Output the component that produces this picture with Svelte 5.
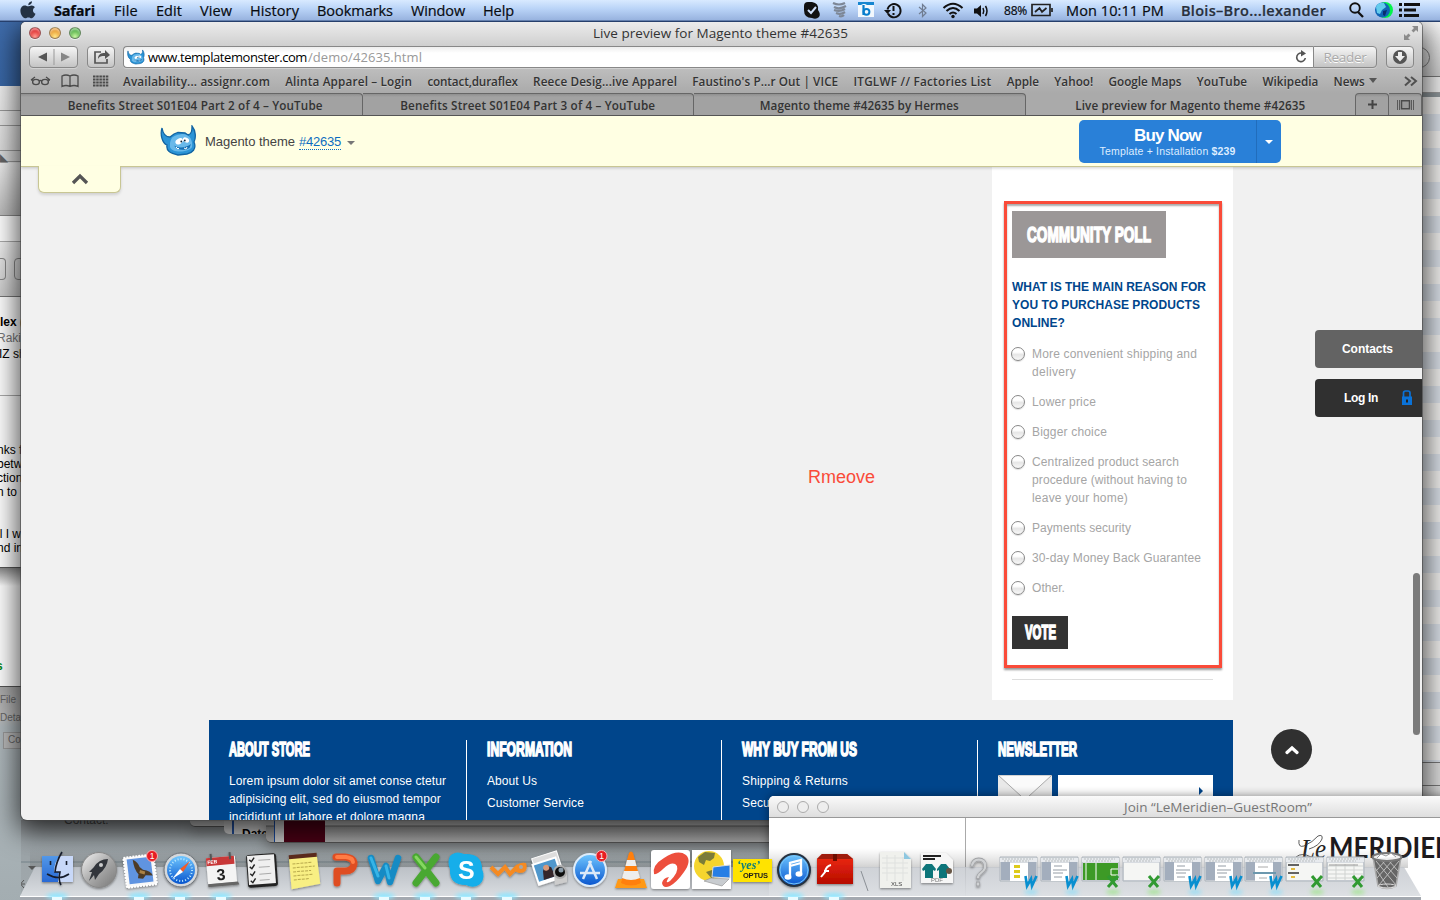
<script>
  // Adjusts tracking so that a label takes up the given measure.
  function fit(node, width) {
    const natural = node.getBoundingClientRect().width;
    const count = node.textContent.length;
    if (count) node.style.letterSpacing = (width - natural) / count + 'px';
  }

  const menus = [['File', 24], ['Edit', 26], ['View', 32], ['History', 49], ['Bookmarks', 76], ['Window', 54], ['Help', 31]];
  const bookmarks = [
    ['Availability... assignr.com', 147], ['Alinta Apparel – Login', 127], ['contact,duraflex', 90.5],
    ['Reece Desig...ive Apparel', 144], ["Faustino's P...r Out | VICE", 146], ['ITGLWF // Factories List', 138],
    ['Apple', 32.5], ['Yahoo!', 39], ['Google Maps', 73], ['YouTube', 50.5], ['Wikipedia', 56], ['News', 31]
  ];
  const options = [
    [['More convenient shipping and', 165], ['delivery', 44]],
    [['Lower price', 64]],
    [['Bigger choice', 75]],
    [['Centralized product search', 147], ['procedure (without having to', 155], ['leave your home)', 96]],
    [['Payments security', 99]],
    [['30-day Money Back Guarantee', 169]],
    [['Other.', 33]]
  ];
  const docs = [
    [1019, 'W', 'yellow'], [1060, 'W', 'text'], [1101, 'X', 'green'], [1142, 'X', 'sheet'], [1183, 'W', 'text'],
    [1224, 'W', 'text'], [1264, 'W', 'band'], [1305, 'X', 'blocks'], [1346, 'X', 'grid']
  ];
  const running = [57, 139, 180, 221, 384, 425, 466, 507, 793, 834];
</script>

{#snippet label(text, w)}<span class="label" use:fit={w}>{text}</span>{/snippet}

{#snippet heading(text, w, h)}
  <svg class="heading" width={w} height={h} viewBox="0 0 {w} {h}">
    <text x="0" y={h - 1} textLength={w} lengthAdjust="spacingAndGlyphs" font-size={h * 1.3}>{text}</text>
  </svg>
{/snippet}

{#snippet monster()}
  <path d="M1 2 C2 8 5 11 9 11 L13 8 L17 6.500 L24 7 L27 9 C31 8 31 4 31 0 C35 5 35 12 33 16 C36 23 31 27 26 28 L17 29 C9 27 5 25 6 19 C1 17 -1 8 1 2Z" fill="#2b94d6" stroke="#1264a3" stroke-width="1.300"/>
  <path d="M9 17 C10 10 15 9 21 8 C29 8 32 15 31 21 C29 26 11 28 9 21Z" fill="#69b9ea"/>
  <ellipse cx="18.500" cy="15.500" rx="4" ry="2.700" fill="#fff" transform="rotate(-30 18 16)"/>
  <ellipse cx="25" cy="14" rx="3.300" ry="2.300" fill="#fff" transform="rotate(30 25 14)"/>
  <circle cx="20.300" cy="15.500" r=".9" fill="#123"/><circle cx="23.800" cy="14.500" r=".9" fill="#123"/>
  <path d="M13 19.500 C17 22.500 25 22 30 18 L28.500 22 C23 25 16 24.500 13 19.500Z" fill="#1670b4"/>
  <path d="M15 21l2 2 1-1M26 21l-1 2-2-1" stroke="#fff" fill="none"/>
{/snippet}

<div class="desktop">
  <div class="left-windows">
    <div class="blue"></div>
    <div class="chrome"><i></i><i></i><i></i><i></i><b class="pull">◣</b></div>
    <div class="search"></div>
    <div class="tools"><span></span><span></span></div>
    <div class="mail">
      <p class="bold">lex (</p><p class="dim">Raki</p><p>IZ sh</p>
      <hr />
      <div class="body"><p>nks fo</p><p>betw</p><p>ction</p><p>n to</p><p>&nbsp;</p><p>&nbsp;</p><p>ll I wa</p><p>nd in</p></div>
    </div>
    <div class="under"><b>s</b></div>
    <div class="panel"><p>File</p><p>Detai</p><p class="tab">Con</p></div>
  </div>

  <div class="bottom-windows">
    <div class="strip"><span>Contact:</span></div>
    <div class="date">Date</div>
    <div class="maroon"><span></span></div>
    <svg class="back" width="769" height="80" viewBox="0 820 769 80">
      <path d="M0 820v74H769M12 900v-38h757" stroke="#75838a" fill="none"/>
      <path d="M28 866h8l-4 4z" fill="#555"/><path d="M20 879v10M15 884h10M17 880l7 8M24 880l-7 8" stroke="#555"/>
    </svg>
  </div>

  <div class="right-windows"><div class="cap"><span></span></div><div class="gap"></div><div class="list"></div><div class="status"></div><div class="white"></div></div>

  <main class="safari">
    <header class="chrome-bar">
      <div class="title-row">
        <span class="lights"><i class="red"></i><i class="amber"></i><i class="green"></i></span>
        {@render label('Live preview for Magento theme #42635', 255)}
        <svg class="expand" width="14" height="14" viewBox="0 0 14 14"><path d="M8 0h6v6l-2-2-2.500 2.500-2-2L10 2zM6 14H0V8l2 2 2.500-2.500 2 2L4 12z" fill="#8b8b8b"/></svg>
      </div>
      <div class="tool-row">
        <div class="nav"><svg width="48" height="20" viewBox="0 0 48 20"><path d="M17 5.500v9L8 10z" fill="#555"/><path d="M31 5.500v9l9-4.500z" fill="#868686"/><path d="M24 2v16" stroke="#999"/></svg></div>
        <div class="share"><svg width="26" height="20" viewBox="0 0 26 20"><path d="M13 5H7v11h12v-4" stroke="#555" stroke-width="1.700" fill="none"/><path d="M10 12c0-5 3-6 7-6V3l5 5-5 4V9c-4 0-5 0-7 3z" fill="#555"/></svg></div>
        <div class="url">
          <svg width="18" height="16" viewBox="-1 -1 37 31">{@render monster()}</svg>
          {@render label('www.templatemonster.com', 159)}<span class="path">{@render label('/demo/42635.html', 114)}</span>
          <svg class="reload" width="14" height="14" viewBox="0 0 14 14"><path d="M9 3.500A4.300 4.300 0 1 0 11.300 8" stroke="#555" stroke-width="1.600" fill="none"/><path d="M7 0l5 3.500L7 6.500z" fill="#555"/></svg>
        </div>
        <div class="reader">{@render label('Reader', 43)}</div>
        <div class="download"><svg width="16" height="16" viewBox="0 0 16 16"><circle cx="8" cy="8" r="7" fill="#555"/><path d="M6 3h4v4h3l-5 5.500L3 7h3z" fill="#eee"/></svg></div>
      </div>
      <div class="bookmark-row">
        <svg class="marks" width="80" height="16" viewBox="29 73 80 16" fill="none" stroke="#4b4b4b">
          <g stroke-width="1.300"><ellipse cx="36" cy="82" rx="3.400" ry="2.600"/><ellipse cx="45" cy="82" rx="3.400" ry="2.600"/><path d="M31 80h2M48 80h2M39 81q1.500-1 3 0M31 80l4-3M50 80l-4-3"/>
          <path d="M62 86.500V76q4-2 8 0 4-2 8 0v10.500q-4-2-8 0-4-2-8 0zM70 76v10"/></g>
          <path d="M93 76.500h16M93 79.500h16M93 82.500h16M93 85.500h16" stroke-width="2" stroke-dasharray="2.500 .7"/>
        </svg>
        <div class="links">{#each bookmarks as [t, w]}{@render label(t, w)}{/each}</div>
        <svg class="more" width="50" height="14" viewBox="0 0 50 14"><path d="M0 4h8L4 9z" fill="#555"/><path d="M36 3l5 4-5 4.500M42 3l5 4-5 4.500" stroke="#505050" stroke-width="2" fill="none"/></svg>
      </div>
      <div class="tabs">
        <div class="tab">{@render label('Benefits Street S01E04 Part 2 of 4 – YouTube', 255)}</div>
        <div class="tab">{@render label('Benefits Street S01E04 Part 3 of 4 – YouTube', 255)}</div>
        <div class="tab">{@render label('Magento theme #42635 by Hermes', 199)}</div>
        <div class="tab active">{@render label('Live preview for Magento theme #42635', 230)}</div>
        <div class="tab small plus"><svg width="9" height="9" viewBox="0 0 9 9"><path d="M4.500 0v9M0 4.500h9" stroke="#444" stroke-width="2"/></svg></div>
        <div class="tab small"><svg width="17" height="10" viewBox="0 0 17 10"><path d="M.5 0v10M2.500 0v10M14.500 0v10M16.500 0v10" stroke="#5a5a5a"/><path d="M4.500.7h8v8h-8z" fill="#999" stroke="#4a4a4a" stroke-width="1.500"/></svg></div>
      </div>
    </header>

    <section class="page">
      <div class="promo">
        <svg class="logo" width="36" height="31" viewBox="-1 -1 36 31">{@render monster()}</svg>
        <span class="theme">{@render label('Magento theme', 90)}</span>
        <a class="number" href="#theme">{@render label('#42635', 42)}</a>
        <i class="caret"></i>
        <div class="buy"><div><strong>{@render label('Buy Now', 67)}</strong><small>{@render label('Template + Installation ', 112)}<b>{@render label('$239', 24)}</b></small></div><i></i></div>
      </div>
      <div class="pull-tab"><svg width="18" height="12" viewBox="0 0 18 12"><path d="M2 10l7-7 7 7" stroke="#555" stroke-width="3.300" fill="none"/></svg></div>

      <aside class="column">
        <div class="poll">
          <h2>{@render heading('COMMUNITY POLL', 124, 17)}</h2>
          <div class="question">
            <div>{@render label('WHAT IS THE MAIN REASON FOR', 194)}</div><div>{@render label('YOU TO PURCHASE PRODUCTS', 188)}</div><div>{@render label('ONLINE?', 53)}</div>
          </div>
          <ul>{#each options as lines}<li><i class="radio"></i><div>{#each lines as [t, w]}<div>{@render label(t, w)}</div>{/each}</div></li>{/each}</ul>
          <button>{@render heading('VOTE', 31, 15)}</button>
        </div>
        <hr />
      </aside>

      <footer>
        <div class="col about"><h3>{@render heading('ABOUT STORE', 81, 15)}</h3>
          <div>{@render label('Lorem ipsum dolor sit amet conse ctetur', 217)}</div><div>{@render label('adipisicing elit, sed do eiusmod tempor', 212)}</div><div>{@render label('incididunt ut labore et dolore magna', 196)}</div></div>
        <div class="col linked"><h3>{@render heading('INFORMATION', 85, 15)}</h3><div>{@render label('About Us', 50)}</div><div>{@render label('Customer Service', 97)}</div></div>
        <div class="col linked"><h3>{@render heading('WHY BUY FROM US', 115, 15)}</h3><div>{@render label('Shipping & Returns', 106)}</div><div>{@render label('Secure Shopping', 94)}</div></div>
        <div class="col"><h3>{@render heading('NEWSLETTER', 79, 15)}</h3>
          <div class="newsletter"><svg width="54" height="36" viewBox="0 0 54 36"><path d="M0 0h54v36H0z" fill="#e9e9e9"/><path d="M0 0h54L30 22q-3 2-6 0z" fill="#fafafa" stroke="#aaa"/></svg><div class="field"><i></i></div></div>
        </div>
      </footer>

      <span class="note">{@render label('Rmeove', 67)}</span>
      <div class="side contacts">{@render label('Contacts', 51)}</div>
      <div class="side login">{@render label('Log In', 34)}<svg width="12" height="16" viewBox="0 0 12 16"><path d="M2.500 7V3q0-2 2-2h2.500q2 0 2 2v4" stroke="#0a72d8" stroke-width="1.700" fill="none"/><path d="M1 6.500h10V15H1z" fill="#0a72d8"/><path d="M5 9.500h2v3H5z" fill="#222"/></svg></div>
      <div class="up"><svg width="14" height="10" viewBox="0 0 14 10"><path d="M2 7.500l5-4.500 5 4.500" stroke="#fff" stroke-width="3.200" stroke-linecap="round" fill="none"/></svg></div>
      <div class="scrollbar"></div>
    </section>
  </main>

  <section class="join">
    <div class="join-title"><span class="rings"><i></i><i></i><i></i></span>{@render label('Join “LeMeridien–GuestRoom”', 188)}</div>
    <div class="join-body">
      <svg width="474" height="82" viewBox="966 818 474 82">
        <text x="1301" y="858" font-family="'Liberation Serif', serif" font-style="italic" font-size="27" textLength="25" lengthAdjust="spacingAndGlyphs" fill="#222">Le</text>
        <path d="M1299 840q-1 8 5 6 9-4 14-10 5-2 4 3-3 7-13 10M1296 857q6-5 15 0" stroke="#333" stroke-width=".8" fill="none"/>
        <text x="1329" y="857.500" font-family="Lato, sans-serif" font-weight="700" font-size="28" textLength="126" lengthAdjust="spacingAndGlyphs" fill="#1d1a1c">MERIDIEN</text>
      </svg>
    </div>
  </section>

  <nav class="menubar">
    <svg class="apple" width="16" height="18" viewBox="0 0 16 18"><path d="M12 .2c.2 2-1.600 3.900-3.700 4C8 2.300 9.900.4 12 .2zM8 5.300c1 0 2-.9 3.700-.9 1.300 0 2.500.7 3.200 1.800-2.800 1.700-2.400 5.400.6 6.600-.9 2.300-2.300 4.500-3.800 4.500-1.300 0-1.700-.8-3.300-.8s-2.100.8-3.300.8C3 17.300.4 13.300.4 9.800c0-3.400 2.200-5.300 4.400-5.300 1.400 0 2.500.8 3.200.8z" fill="#243244"/></svg>
    <span class="app">{@render label('Safari', 41)}</span>
    {#each menus as [t, w]}{@render label(t, w)}{/each}
    <div class="status-items">
      <svg class="glyphs" width="190" height="22" viewBox="800 0 190 22">
        <path d="M804 6q0-4 4-4h4q7 1 6 8 3 4 1 7-3 3-7 1-8 0-8-8z" fill="#111"/><path d="M808 10l3 3 5-6" stroke="#cfe0fa" stroke-width="2" fill="none"/>
        <path d="M833 3q6 3 12 0M834 7q5 3 12-1M834 10q6 2 11-1M836 13q5 2 9-1M839 16q3 1 5-1" stroke="#7d8796" stroke-width="2.200" fill="none"/>
        <path d="M858 2h16v15h-16z" fill="#f2f8fd"/><path d="M858 2h16v3h-7l-2-1h-2l-2 1h-3z" fill="#1686d0"/><path d="M863.500 5v10" stroke="#087dcc" stroke-width="2.200"/><circle cx="866.500" cy="11.800" r="2.900" fill="none" stroke="#087dcc" stroke-width="2"/>
        <path d="M888 13.500a6.600 6.600 0 1 0-.5-4" stroke="#111" stroke-width="1.900" fill="none"/><path d="M884 10h7l-3.500 4z" fill="#111"/><path d="M893.500 6v5M893.500 13v2" stroke="#111" stroke-width="2"/>
        <path d="M919 7l7 6-3.500 3.500v-12L926 8l-7 6" stroke="#707d91" stroke-width="1.200" fill="none"/>
        <path d="M943.500 8q9.500-8.500 19 0M946.500 11q6.500-6 13 0M949.500 14q3.500-3 7 0" stroke="#111" stroke-width="2.100" fill="none"/><circle cx="953" cy="16.500" r="1.700" fill="#111"/>
        <path d="M974 8.500h3l4-3.500v12l-4-3.500h-3z" fill="#111"/><path d="M983 8q1.500 3 0 6M985.500 6q3 5 0 10" stroke="#111" stroke-width="1.500" fill="none"/>
      </svg>
      <span class="percent">{@render label('88%', 23)}</span>
      <svg class="battery" width="23" height="14" viewBox="0 0 23 14"><path d="M1 1.500h18v11H1zM21 5v4M4 9l4.500-4 2.500 4 4.500-4" stroke="#222" stroke-width="1.700" fill="none"/></svg>
      <span class="clock">{@render label('Mon 10:11 PM', 98)}</span>
      <span class="user">{@render label('Blois–Bro...lexander', 145)}</span>
      <svg class="tail" width="73" height="20" viewBox="1348 1 73 20"><circle cx="1355" cy="9" r="4.800" fill="none" stroke="#111" stroke-width="1.900"/><path d="M1358 13l5 5" stroke="#111" stroke-width="2.300"/><circle cx="1385" cy="11" r="8" fill="#02f34b"/><circle cx="1382.500" cy="11" r="7.500" fill="#1065b5"/><path d="M1376 8q2-5 8-4l2 4-4 3-2 4-3-1z" fill="#63cbed"/><path d="M1383 12l4-1-2 6-2-1z" fill="#092e70"/><path d="M1399 5.500h3M1404 5.500h16M1399 11h3M1404 11h12M1399 16.500h3M1404 16.500h15" stroke="#111" stroke-width="3"/></svg>
    </div>
  </nav>

  <svg class="dock" width="1440" height="60" viewBox="0 840 1440 60">
    <defs>
      <linearGradient id="shelf" x2="0" y2="1"><stop offset="0" stop-color="#c3c7cd" stop-opacity=".8"/><stop offset="1" stop-color="#dcdfe3" stop-opacity=".97"/></linearGradient>
      <linearGradient id="blue" x2="0" y2="1"><stop offset="0" stop-color="#70c7ff"/><stop offset="1" stop-color="#0754ce"/></linearGradient>
      <linearGradient id="silver" x2="1" y2="1"><stop offset="0" stop-color="#f5f5f5"/><stop offset=".5" stop-color="#aaa"/><stop offset="1" stop-color="#777"/></linearGradient>
      <linearGradient id="haze" x2="0" y2="1"><stop offset="0" stop-color="#777" stop-opacity="0"/><stop offset="1" stop-color="#555" stop-opacity=".28"/></linearGradient>
      <linearGradient id="red" x2="0" y2="1"><stop offset="0" stop-color="#f12b13"/><stop offset="1" stop-color="#b60b00"/></linearGradient>
      <filter id="drop" x="-.3" y="-.3" width="1.600" height="1.700"><feDropShadow dx="0" dy="1.200" stdDeviation="1.200" flood-opacity=".4"/></filter>
      <filter id="soft" x="-1" y="-1" width="3" height="3"><feGaussianBlur stdDeviation="2"/></filter>
    </defs>
    <path d="M30 848H1408V868H30z" fill="url(#haze)"/>
    <path d="M35 867H1404L1421 896H20z" fill="url(#shelf)"/>
    <path d="M20 896H1421V900H20z" fill="#a4a9b0"/><path d="M20 896.500H1421" stroke="#fff"/>
    {#each running as x}<ellipse cx={x} cy="896" rx="11" ry="3" fill="#8ee6ff" filter="url(#soft)"/><path d="M{x - 5} 897h10v3h-10z" fill="#e9fbff"/>{/each}
    <g filter="url(#drop)">
      <path d="M42 856h31v26H42z" fill="url(#blue)"/><path d="M42 856h18q-6 6-6 16h5q-1 4-1 10H42z" fill="#3f78d8" opacity=".6"/><path d="M60 856h13v26H58q0-6 1-10h-5q0-10 6-16z" fill="#c8d8f8"/><path d="M62 852q-6 10-7 20h5q-2 8 1 13M47 874q12 7 22 0M50.500 861v4M66.500 861v4" stroke="#161c2b" stroke-width="1.600" fill="none"/>
      <circle cx="99" cy="870" r="17.500" fill="url(#silver)" stroke="#888"/><path d="M89 872l5-5q5-8 14-8-1 9-9 15l-4 6-1-5-5 6 3-9zM88 879l4-3" fill="#30343a"/><circle cx="101" cy="865" r="2" fill="#ccc"/>
      <g transform="rotate(-7 140 870)"><path d="M125 856h30v30h-30z" fill="#f8f8f8" stroke="#fff" stroke-width="2" stroke-dasharray="2 1"/><path d="M128 858h24v25h-24z" fill="#6094e1"/><path d="M134 859q5 3 6 8l3 3q8 2 9 7l-7-1-3 3-5-1 1-4q-4-5-4-15z" fill="#4e3b27"/><path d="M140 870l5 2-1 3-5-2z" fill="#ab8244"/></g>
      <circle cx="181" cy="870" r="17" fill="#d5d8db" stroke="#70757b"/><circle cx="181" cy="870" r="14" fill="url(#blue)"/><circle cx="181" cy="870" r="11" fill="none" stroke="#c3eeff" stroke-width="2" stroke-dasharray="1 2"/><path d="M190 861l-7 11-3-3z" fill="#f65b25"/><path d="M172 879l8-10 3 3z" fill="#fff"/>
      <g transform="rotate(-5 221 870)"><path d="M207 857h29v26h-29z" fill="#f4f4f4"/><path d="M207 857h28v8h-28z" fill="#c83839"/><path d="M207 883h30l1 3h-31z" fill="#666"/><path d="M212 853v7M231 853v7" stroke="#555" stroke-width="2"/><text x="208" y="863" font-size="5" fill="#fff" font-weight="700">FEB</text><text x="216" y="880" font-size="16" font-weight="700" fill="#222">3</text></g>
      <g transform="rotate(-4 262 870)"><rect x="247" y="854" width="30" height="33" rx="3" fill="#242424"/><path d="M248 855h27v29h-27z" fill="#efefef"/><path d="M250 859l2 2 3-4M250 866l2 2 3-4M250 873l2 2 3-4M250 880l2 2 3-4" stroke="#222" fill="none" stroke-width="1.400"/><path d="M259 860h12M259 867h11M259 874h12M259 880h10" stroke="#aaa"/></g>
      <g transform="rotate(-5 304 870)"><path d="M290 856h28l1 29-29 3z" fill="#f8ef83"/><path d="M290 854h28v4h-28z" fill="#5a2b1d"/><path d="M293 863h20M293 867h22M293 871h18M293 875h20M293 879h15" stroke="#b7a84c" stroke-dasharray="3 1"/></g>
      <g fill="none" stroke-linejoin="round" stroke-linecap="round" stroke-width="7"><path d="M336 857h9q9 1 9 7-1 7-9 7h-8v12" stroke="#df4d22"/><path d="M337 857h9q7 1 7 5" stroke="#ff7c45" stroke-width="4"/><path d="M371 858l7 23 8-15 4 16 8-24" stroke="#158bc4" stroke-width="6.500"/><path d="M371 858l7 18M386 866l3 12" stroke="#36b4e7" stroke-width="3"/><path d="M416 857l20 26M436 857l-20 26" stroke="#49a831"/><path d="M416 857l9 11" stroke="#85d760" stroke-width="3"/></g>
      <path d="M450 856q6-6 14-2 18-1 18 15 4 9-2 15-6 5-14 1-17 0-16-16-3-7 0-13z" fill="#13aeea"/><text x="458" y="878.500" font-size="25" font-weight="700" fill="#fff">S</text>
      <path d="M491 867l7 7 7-7 5 7 8-8" fill="none" stroke="#f58a20" stroke-width="4"/><path d="M512 870q6-9 14-7 3 10-7 10z" fill="#f58a20"/><circle cx="521" cy="867" r="2" fill="#a7a7a7"/>
      <g transform="rotate(-18 549 870)"><path d="M536 854h26v24h-26z" fill="#ddd" stroke="#fff"/><path d="M534 859h26v23h-26z" fill="#fff"/><path d="M536 861h22v17h-22z" fill="#4f97cc"/><path d="M541 878l2-9 4-5 5 4 1 10z" fill="#35252c"/><circle cx="547" cy="867" r="3" fill="#d99978"/></g><path d="M554 873h13v9l-12 3z" fill="#ccc"/><circle cx="560" cy="872" r="6" fill="#111" stroke="#aaa" stroke-width="2"/><circle cx="561" cy="870" r="2.500" fill="#8b9ca9"/>
      <circle cx="590" cy="870" r="16" fill="url(#blue)" stroke="#ddecfa" stroke-width="2"/><path d="M583 879l8-18M589 861l8 18M580 873h20" stroke="#dce9f8" stroke-width="2.500"/>
      <path d="M618 879h26l3 9h-32z" fill="#ff9919"/><path d="M621 883l8-30q2-3 4 0l8 30q-10 5-20 0z" fill="#ff7f0b"/><path d="M627 860h8l1.500 6h-11zM624 871h14l2 7q-9 4-18 0z" fill="#eee"/>
      <rect x="651" y="850" width="39" height="39" rx="3" fill="#fff"/><path d="M654 874q-2-9 10-16 14-9 22-3 6 6-2 17-7 10-14 14-7 3-8-3 1-5 7-6-5 8 1 4 9-9 7-15-4-6-14 3-6 6-9 5z" fill="#ed4f3d"/>
      <path d="M692 850h39v39h-39z" fill="#fff"/><circle cx="709" cy="866" r="15" fill="#f5d52d"/><path d="M698 857l7-5 10 1-1 5-4 3-4-1-2 5-5-3zM706 872l6-2 4 4-3 6z" fill="#7b7c38"/><path d="M713 867l17-2 0 13-18-1z" fill="#277ee5" stroke="#ddd"/><path d="M711 878l18 1-7 7-18-5z" fill="#c8ccd0" stroke="#999" stroke-width=".7"/>
      <path d="M733 859h39v23h-39z" fill="#ffe300"/><text x="737" y="869" class="yes" font-size="12" fill="#087b7b">‘yes’</text><text x="743" y="878" font-size="7.500" font-weight="900" textLength="25" fill="#1b1b1b">OPTUS</text>
      <circle cx="794" cy="870" r="16" fill="url(#blue)" stroke="#263241" stroke-width="2"/><circle cx="794" cy="870" r="14" fill="none" stroke="#77c6f7"/><path d="M790 876v-13l11-3v13M790 866l11-3" stroke="#fff" stroke-width="2.300" fill="none"/><ellipse cx="788" cy="877" rx="3.500" ry="2.700" fill="#fff"/><ellipse cx="799" cy="874" rx="3.500" ry="2.700" fill="#fff"/>
      <path d="M817 859l5-5h25l6 5v25h-36z" fill="url(#red)"/><path d="M817 859l5-5h25l6 5z" fill="#9e1a10"/><path d="M833 854h4v7h-4z" fill="#6d0a05"/><path d="M831 865q-5 1-6 7l-4 5M824 871h5" stroke="#fff" stroke-width="2" fill="none"/>
      <path d="M880 852h24l7 7v29h-31z" fill="#f0f1ed"/><path d="M882 858h26M882 863h26M882 868h26M882 873h26M887 855v26M895 855v26M903 857v24" stroke="#dfe1df"/><path d="M904 852v7h7z" fill="#8ec7e0"/><text x="891" y="886" font-size="6" fill="#444">XLS</text>
      <path d="M921 853h25l7 7v23h-32z" fill="#f6f6f6"/><path d="M922 869l4-5 2 0 4 0 4 5-1 2-2-1v8h-8v-8l-2 1zM937 869l4-5h5l4 5-1 2-2-1v8h-8v-8l-2 1z" fill="#11757a"/><path d="M923 856h18M923 859h12" stroke="#222" stroke-width="2"/><circle cx="949" cy="871" r="3" fill="#654"/><text x="931" y="882" font-size="6" fill="#777">PDF</text>
      <text x="969" y="886" font-size="40" textLength="19" lengthAdjust="spacingAndGlyphs" fill="#cfd1d3" stroke="#a0a2a5" stroke-width=".8">?</text>
    </g>
    <path d="M861 871l7 20" stroke="#8b9096"/>
    {#each docs as [x, app, kind]}
      <g transform="translate({x - 19} 857)">
        <path d="M0 0h37v24H0z" fill="#d8dce1" stroke="#aeb5bc"/><path d="M0 1h37v4H0z" fill="#e7eaee"/><path d="M2 2h31M4 4h25" stroke="#b9bebf" stroke-dasharray="2 1"/>
        {#if app === 'W'}<path d="M1 5h9v18H1zM28 5h8v18h-8z" fill="#a3aebd"/><path d="M10 6h18v18H10z" fill="#fff"/>{:else}<path d="M1 6h35v17H1z" fill="#f5f6f4"/>{/if}
        {#if kind === 'yellow'}<path d="M14 8h6v3h-6zM14 13h6v3h-6zM14 18h6v3h-6z" fill="#ddca1b"/>{/if}
        {#if kind === 'text'}<path d="M13 9h8M12 13h14M12 16h10M13 20h8" stroke="#949ca5"/>{/if}
        {#if kind === 'green'}<path d="M1 6h35v17H1z" fill="#3d9a26"/><path d="M4 6v17M14 6v17M36 12h-7v6h7" stroke="#fff" fill="none"/>{/if}
        {#if kind === 'band'}<path d="M8 16h23" stroke="#6c98ae" stroke-width="2"/><path d="M13 10h10M14 21h8" stroke="#aaa"/>{/if}
        {#if kind === 'blocks'}<path d="M2 8h11M2 16h11" stroke="#333" stroke-width="1.500"/><path d="M5 12h4M5 20h4" stroke="#e2ba40" stroke-width="2"/>{/if}
        {#if kind === 'grid'}<path d="M1 9h35M1 13h35M1 17h35M1 21h35M9 7v16M18 7v16M27 7v16" stroke="#d0d3d1"/><path d="M2 8h29" stroke="#999"/>{/if}
        {#if app === 'W'}<path d="M25.500 19l1.500 10 4-7 1 7 4.500-10" stroke="#078fd0" stroke-width="2.600" fill="none"/>{:else}<path d="M26 19l9 11M36 19l-10 11" stroke="#309a31" stroke-width="3"/>{/if}
        <ellipse cx="31" cy="35" rx="7" ry="2" fill={app === 'W' ? '#74dfff' : '#8be86d'} opacity=".7" filter="url(#soft)"/>
      </g>
    {/each}
    <path d="M1373 857l5 29q9 5 18 0l5-29" fill="#666" stroke="#aaa" stroke-width="1.500"/><path d="M1376 861l20 24M1382 861l15 17M1389 861l9 10M1375 868l13 19M1399 861l-20 24M1392 861l-15 17M1385 861l-9 10" stroke="#bcbcbc"/><ellipse cx="1387" cy="857" rx="14.500" ry="4" fill="#eee" stroke="#777" stroke-width="2"/><path d="M1377 858l4-4 5 2 5-3 5 4" stroke="#999" fill="#fff"/><ellipse cx="1387" cy="886" rx="9" ry="2" fill="none" stroke="#ddd"/>
    {#each [152, 601.5] as x}<circle cx={x} cy="856" r="5.500" fill="#e71c24" stroke="#f9b0b0"/><text x={x - 2.2} y="859" font-size="8.500" fill="#fff">1</text>{/each}
  </svg>
</div>

<style>
  :global(body) { margin: 0; overflow: hidden; }
  .desktop { position: relative; width: 1440px; height: 900px; overflow: hidden; background: #8d9599; font-family: "Liberation Sans", Arial, sans-serif; font-size: 12px; }
  .desktop :global(svg) { display: block; flex: none; }
  .label { display: inline-block; white-space: pre; flex: none; }
  p { margin: 0; white-space: nowrap; }

  .menubar { position: absolute; inset: 0 0 auto; height: 21px; box-sizing: border-box; border-bottom: 1px solid #6480ae; box-shadow: 0 1px #263f6c; display: flex; align-items: center; gap: 18px; padding-left: 20px; background: linear-gradient(#d8eaff, #b9d3f7 45%, #98b3df); font: 14.500px "Open Sans", sans-serif; color: #080b10; -webkit-text-stroke: .2px; }
  .app, .user { font-weight: 700; } .app { margin-right: 1px; } .user { color: #29303b; font-weight: 600; }
  .status-items { display: flex; align-items: center; margin-left: auto; padding-right: 19px; height: 21px; } .glyphs { margin-top: 2px; }
  .percent { font-size: 12px; margin-left: 14px; } .battery { margin-left: 4px; } .clock { margin-left: 12px; } .user { margin-left: 17px; } .tail { margin-left: 22px; }

  .left-windows { position: absolute; left: 0; top: 22px; width: 250px; height: 878px; overflow: hidden; }
  .blue { height: 64px; background: linear-gradient(#3f6cab, #3866a5); }
  .chrome { height: 129px; background: linear-gradient(#f0f0f0, #d8d8d8 76px, #eee 77px, #bbb); display: flex; flex-direction: column; position: relative; }
  .chrome i { border-bottom: 1px solid #999; height: 24px; } .chrome i:nth-child(2) { height: 14px; } .chrome i:nth-child(3) { height: 24px; } .chrome i:nth-child(4) { height: 10px; }
  .pull { position: absolute; top: 66px; left: 0; font-size: 10px; color: #666; }
  .search { height: 25px; border: solid #888; border-width: 1px 0; border-bottom-color: #aaa; background: #fff; }
  .tools { height: 54px; border-bottom: 1px solid #777; background: linear-gradient(#f0f0f0, #ccc); display: flex; gap: 8px; align-items: center; }
  .tools span { width: 5px; height: 20px; border: 1px solid #888; border-left: 0; border-radius: 0 4px 4px 0; box-sizing: content-box; } .tools span:last-child { border: 1px solid #888; border-radius: 4px 0 0 4px; width: 30px; }
  .mail { height: 253px; padding-top: 17px; border-bottom: 1px solid #555; background: #fff; line-height: 16px; overflow: hidden; }
  .mail .bold { font-weight: 700; } .mail .dim { color: #777; margin-left: -3px; } .mail .dim + p { margin-left: -1px; }
  .mail hr { margin: 33px 0 47px; border: 0; border-top: 1px solid #aaa; }
  .body { line-height: 14px; margin-left: -3px; }
  .under { height: 118px; background: linear-gradient(#888, #fff 18px); border-bottom: 1px solid #555; color: #078b20; padding: 0; }
  .under b { display: block; padding-top: 91px; margin-left: -4px; }
  .panel { height: 213px; padding-top: 4px; background: linear-gradient(#aaa, #bbb 30px, #b0b9bd 40px, #a3adb1); color: #666; font-size: 10px; line-height: 18px; }
  .panel .tab { margin: 5px 0 0 3px; padding-left: 4px; border: 1px solid #999; background: #bbb; height: 15px; line-height: 14px; }

  .bottom-windows { position: absolute; z-index: 0; left: 21px; top: 820px; width: 760px; height: 80px; background: linear-gradient(#8b8f92, #9ca4a8 22px, #a0a8ac); overflow: hidden; }
  .strip { position: absolute; left: 169px; width: 591px; height: 6px; background: #c0c0c0; border-bottom: 1px solid #555; border-radius: 0 0 0 5px; box-shadow: 0 6px 12px #5558; }
  .strip span { position: absolute; left: -126px; top: -7px; color: #444; }
  .date { position: absolute; left: 203px; top: 0; width: 50px; height: 14px; overflow: hidden; padding-left: 18px; border-radius: 0 0 0 5px; background: #ccc linear-gradient(#234f9b, #234f9b) 8px 0/2px 20px no-repeat; font-weight: 700; line-height: 29px; }
  .maroon { position: absolute; left: 245px; top: 0; width: 515px; height: 22px; border-radius: 0 0 0 5px; background: linear-gradient(#bbb, #bbb 5px, #666 6px, #999 7px, #aaa); border-bottom: 1px solid #555; box-shadow: 0 5px 13px #555a; }
  .maroon span { display: block; width: 41px; height: 22px; margin-left: 18px; background: #4b0015; box-shadow: -9px 0 #ccc, -10px 0 #194a9d; }
  .back { position: absolute; left: -21px; top: 0; z-index: -1; }

  .right-windows { position: absolute; left: 1390px; top: 22px; width: 50px; height: 878px; }
  .cap { height: 54px; background: linear-gradient(#f8f8f8, #ccc); border-bottom: 1px solid #777; overflow: hidden; } .cap span { display: block; width: 38px; height: 19px; margin-top: 25px; border: 1px solid #777; border-radius: 14px; }
  .gap { height: 15px; background: #eee; border-bottom: 1px solid #999; margin-bottom: 4px; }
  .list { height: 665px; background: repeating-linear-gradient(#f0efed 0 17px, #d9dfe7 17px 34px); }
  .status { height: 22px; border: solid #777; border-width: 1px 0; background: #ddd; } .white { height: 120px; background: #ddd; }

  .safari { position: absolute; left: 21px; top: 22px; width: 1401px; height: 798px; overflow: clip; border-radius: 5px 5px 6px 6px; background: #f1f1f1; box-shadow: 0 0 0 1px #4449, 0 8px 28px 3px #000b; }
  .chrome-bar { height: 94px; background: linear-gradient(#ececec, #cfcfcf 24px, #b5b5b5 57px, #aaa 71px); font-family: "Open Sans", sans-serif; color: #333; }
  .title-row { height: 22px; display: flex; align-items: center; justify-content: center; position: relative; left: -1px; font-size: 13.500px; }
  .lights { position: absolute; left: 9px; top: 5px; display: flex; gap: 8px; }
  .lights i { width: 10px; height: 10px; border: 1px solid #6669; border-radius: 50%; box-shadow: inset 0 2px 2px #fff7, 0 1px #fff9; }
  .lights .red { background: radial-gradient(circle at 50% 85%, #ff9c91, #de2a2c 65%); } .lights .amber { background: radial-gradient(circle at 50% 85%, #ffe588, #e8992e 65%); } .lights .green { background: radial-gradient(circle at 50% 85%, #c8f6a1, #50ae45 65%); }
  .expand { position: absolute; right: 3px; top: 4px; }
  .tool-row { height: 22px; display: flex; margin: 2px 8px 0; }
  .tool-row > div { box-sizing: border-box; border: 1px solid #888; border-radius: 4px; background: linear-gradient(#f5f5f5, #c4c4c4); display: flex; align-items: center; justify-content: center; box-shadow: 0 1px #ddd9; }
  .tool-row .nav { width: 49px; } .tool-row .share { width: 28px; margin: 0 8px 0 9px; overflow: hidden; }
  .tool-row .url { width: 1191px; border-radius: 4px 0 0 4px; border-right: 0; justify-content: start; padding-left: 3px; background: linear-gradient(#eee, #fff 6px); font-size: 13px; color: #000; }
  .url svg + .label { margin-left: 3px; } .path { color: #999; margin-left: 1px; } .reload { margin-left: auto; margin-right: 5px; }
  .tool-row .reader { width: 64px; border-radius: 0 4px 4px 0; color: #aaa; font-size: 13.500px; text-shadow: 0 1px #fff; }
  .tool-row .download { width: 28px; margin-left: 9px; }
  .bookmark-row { height: 25px; display: flex; align-items: center; padding-left: 8px; font-size: 11.700px; font-weight: 600; }
  .links { display: flex; gap: 15.200px; margin-left: 14px; text-shadow: 0 1px #ddd8; } .more { margin-left: 4px; }
  .tabs { height: 23px; box-sizing: border-box; display: flex; border-bottom: 1px solid #555; }
  .tabs .tab { box-sizing: border-box; width: 332px; display: flex; align-items: center; justify-content: center; border: solid #666; border-width: 1px 1px 0 0; background: linear-gradient(#8f8f8f, #a2a2a2 3px); font-size: 11.700px; font-weight: 600; border-radius: 0 4px 0 0; }
  .tabs .tab:first-child { width: 342px; padding-left: 8px; } .tabs .tab.active { width: 330px; border-color: transparent; border-right: 0; background: #aaa; } .tabs .tab.small { width: 33px; padding: 0; } .tabs .tab.plus { border-left: 1px solid #666; border-radius: 4px 4px 0 0; width: 34px; }

  .page { position: relative; height: 704px; overflow: hidden; color: #999; }
  .promo { height: 50px; display: flex; align-items: center; padding-left: 139px; border-bottom: 1px solid #c8c694; background: #ffffe3; color: #444; font-size: 13px; box-shadow: 0 1px 3px #0003; position: relative; }
  .logo { margin: -1px 0 0 0; } .theme { margin-left: 9px; } .number { color: #0c6cc0; text-decoration: none; border-bottom: 1px dotted #0c6cc0; margin-left: 4px; padding-top: 1px; } .caret { border: 4px solid transparent; border-top-color: #777; border-bottom: 0; margin: 4px 0 0 6px; }
  .buy { margin: 1px 0 0 auto; margin-right: 141px; width: 202px; height: 43px; background: #2980d8; border-radius: 5px; display: flex; align-items: center; color: #fff; text-align: center; }
  .buy > div { width: 177px; height: 43px; border-right: 1px solid #216dbc; } .buy strong { display: block; font-size: 17px; line-height: 18px; padding-top: 7px; } .buy small { display: block; font-size: 10.500px; line-height: 12px; color: #dcecff; } .buy > i { border: 4px solid transparent; border-top-color: #fff; border-bottom: 0; margin-left: 8px; }
  .pull-tab { position: absolute; left: 17px; top: 50px; width: 81px; height: 26px; border: 1px solid #c8c694; border-top: 0; border-radius: 0 0 6px 6px; background: #ffffe3; display: flex; align-items: center; justify-content: center; box-shadow: 0 2px 3px #0002; }
  .column { width: 241px; height: 533px; box-sizing: border-box; margin-left: 971px; padding: 34px 11px 0 12px; background: #fff; }
  .poll { box-sizing: border-box; width: 218px; height: 467px; padding: 7px 5px; border: 3px solid #fa4b39; box-shadow: 0 2px 2px #0006, inset 0 2px 2px #0005; line-height: 18px; }
  h2 { margin: 0 0 20px; width: 154px; height: 47px; background: #9b9797; display: flex; align-items: center; justify-content: center; }
  .heading { overflow: visible; } .heading text { font-family: "Liberation Sans", Arial, sans-serif; font-weight: 700; fill: #fff; stroke: #fff; stroke-width: 1.600px; }
  .question { color: #00468c; font-weight: 700; margin-bottom: 13px; } .question div, li div div, .about > div { height: 18px; }
  ul { list-style: none; margin: 0; padding: 0; } li { display: flex; margin-bottom: 12px; color: #a5a5a5; }
  .radio { width: 12px; height: 12px; flex: none; margin: 2px 7px 0 -1px; border: 1px solid #888; border-radius: 50%; background: linear-gradient(#fff 35%, #e6e6e6 55%, #f8f8f8); box-shadow: 0 1px 1px #0002; }
  button { display: flex; align-items: center; justify-content: center; width: 56px; height: 33px; margin-top: 19px; padding: 0; border: 0; background: #333; }
  .column hr { width: 201px; margin: 11px 0 0 8px; border: 0; border-top: 1px solid #ddd; }
  footer { width: 1024px; height: 100px; box-sizing: border-box; margin: 20px 0 0 188px; padding: 20px 20px 0; display: grid; grid-template-columns: 237px 255px 256px 1fr; background: #00458b; color: #fff; line-height: 18px; }
  .col + .col { border-left: 1px solid #fff; padding-left: 20px; } h3 { height: 15px; margin: 2px 0 15px; } .linked h3 { margin-bottom: 13px; } .linked > div { height: 22px; line-height: 22px; }
  .newsletter { display: flex; gap: 6px; padding-top: 3px; } .field { width: 155px; height: 38px; background: #fff; } .field i { display: block; width: 0; border: 4px solid transparent; border-left-color: #00458b; border-right: 0; margin: 12px 0 0 141px; }
  .note { position: absolute; left: 787px; top: 351px; font-size: 18px; color: #fa4b39; line-height: 21px; }
  .side { position: absolute; right: 0; width: 107px; height: 38px; box-sizing: border-box; border-radius: 4px 0 0 4px; display: flex; align-items: center; color: #fff; font-weight: 700; padding-left: 27px; } .contacts { top: 214px; background: #636363; } .login { top: 263px; background: #303030; padding-left: 29px; } .login svg { margin-left: 23px; }
  .up { position: absolute; left: 1250px; top: 613px; width: 41px; height: 41px; border-radius: 50%; background: #303030; display: flex; align-items: center; justify-content: center; }
  .scrollbar { position: absolute; right: 2px; top: 457px; width: 7px; height: 162px; border-radius: 4px; background: #7b7b7b; }

  .join { position: absolute; left: 769px; top: 796px; width: 680px; height: 110px; border-radius: 5px 0 0; overflow: clip; background: #fff; box-shadow: 0 0 10px #0007; }
  .join-title { height: 21px; border-bottom: 1px solid #999; background: linear-gradient(#fafafa, #dedede); display: flex; align-items: center; font: 13.500px "Open Sans", sans-serif; color: #777; }
  .rings { display: flex; gap: 8px; margin: 0 295px 0 8px; } .rings i { width: 10px; height: 10px; border: 1px solid #aaa; border-radius: 50%; background: #eee; }
  .join-body { margin-left: 196px; border-left: 1px solid #aaa; height: 82px; }
  .dock { position: absolute; left: 0; bottom: 0; pointer-events: none; } .yes { font-family: "Liberation Serif", serif; font-style: italic; font-weight: 700; }
</style>
